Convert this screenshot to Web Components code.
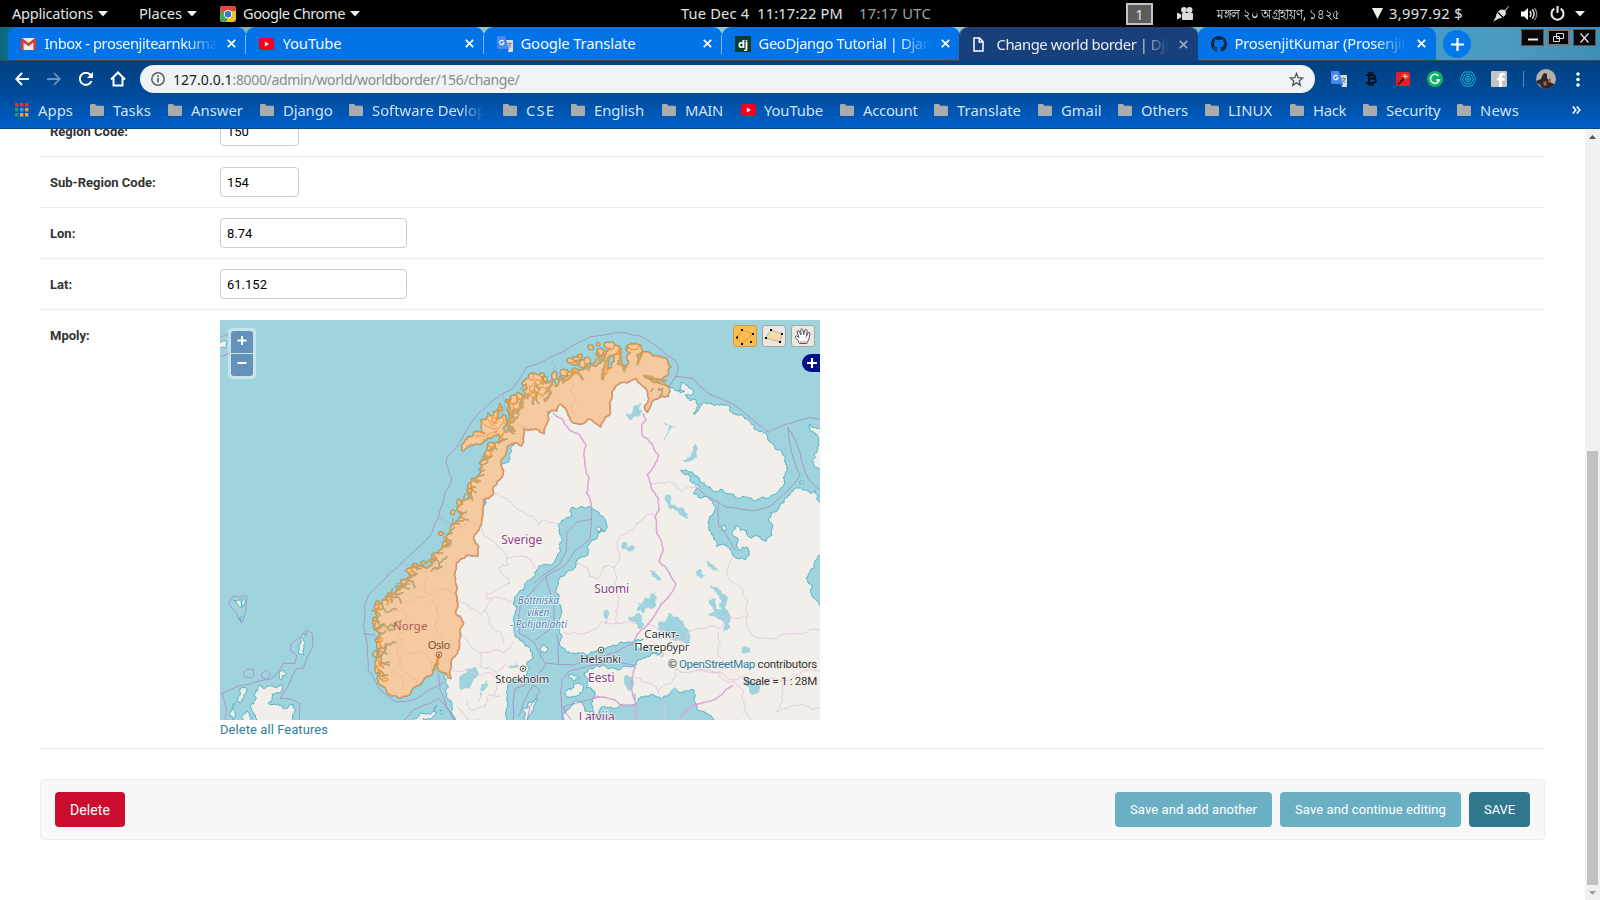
<!DOCTYPE html>
<html lang="en"><head><meta charset="utf-8"><title>Change world border</title>
<style>html,body{margin:0;height:100%;overflow:hidden;background:#fff}</style></head>
<body><desk-top></desk-top>
<script>
const define=(name,css,html,after)=>{
  const t=document.createElement('template');
  t.innerHTML=`<style>*{box-sizing:border-box}${css}</style>${html}`;
  customElements.define(name,class extends HTMLElement{
    constructor(){super();this.attachShadow({mode:'open'}).append(t.content.cloneNode(true));}
    connectedCallback(){if(after)after.call(this,this.shadowRoot);}
  });
};

/* Text run that spreads its letters over a given width */
define('fit-text',`:host{display:block;white-space:pre;flex:none}span{display:inline-block;white-space:pre}`,`<span><slot></slot></span>`,function(r){
  const w=+this.getAttribute('w'),s=r.querySelector('span');if(!w)return;
  this.style.width=w+'px';
  const n=this.textContent.length,nat=s.getBoundingClientRect().width;
  if(!nat)return;
  if(this.hasAttribute('squeeze')){s.style.transformOrigin='0 50%';s.style.transform=`scaleX(${w/nat})`;}
  else s.style.letterSpacing=((w-nat)/n).toFixed(3)+'px';
});

const G={
 tri:`<svg width="10" height="6" viewBox="0 0 10 6"><path d="M0 0h10L5 5.6z" fill="#eee"/></svg>`,
 chrome:`<svg width="16" height="16" viewBox="0 0 16 16"><rect width="16" height="16" rx="3" fill="#f3c31d"/><path d="M2 0h12a2 2 0 0 1 2 2v3H8L4 9 0 3V2a2 2 0 0 1 2-2z" fill="#dd4b3e"/><path d="M0 3l5 7 3 2-2 4H2a2 2 0 0 1-2-2z" fill="#3fa757"/><circle cx="8" cy="8.3" r="4.2" fill="#fff"/><circle cx="8" cy="8.3" r="3.3" fill="#3b78c4"/></svg>`,
 gmail:`<svg width="15" height="12" viewBox="0 0 15 12"><path d="M1 0h13v12H1z" fill="#eee"/><path d="M0 1.2Q0 0 1.2 0L7.5 5 13.8 0Q15 0 15 1.2V12h-2.6V4.4L7.5 8.3 2.6 4.4V12H0z" fill="#d93c32"/></svg>`,
 yt:`<svg width="15" height="12" viewBox="0 0 15 12"><rect width="15" height="12" rx="3" fill="#f8001c"/><path d="M5.8 3.6v4.8L10 6z" fill="#fff"/></svg>`,
 gt:`<svg width="16" height="16" viewBox="0 0 16 16"><path d="M6 4h9q1 0 1 1v10q0 1-1 1h-4z" fill="#dcdcdc"/><path d="M1 0h7l4 13H1q-1 0-1-1V1q0-1 1-1z" fill="#4889f0"/><path d="M9 13h3l-2 3z" fill="#2a56b8"/><path d="M6.6 5.2A2.2 2.2 0 1 0 7 7H5" fill="none" stroke="#fff" stroke-width="1.1"/><path d="M10.5 7.5h4.3M12.6 6.4v1M14 7.6q-.6 2.6-3 4.2M11.4 8.6q1 2 2.8 3" fill="none" stroke="#707a80" stroke-width=".9"/></svg>`,
 dj:`<svg width="16" height="16" viewBox="0 0 16 16"><rect width="16" height="16" fill="#0c3c2c"/><text x="8" y="11.5" text-anchor="middle" font-family="Noto Sans,sans-serif" font-weight="700" font-size="11" fill="#fff">dj</text></svg>`,
 file:`<svg width="11" height="15" viewBox="0 0 11 15"><path d="M1 1h5.6L10 4.6V14H1z M6.3 1v4H10" fill="none" stroke="#fff" stroke-width="1.5"/></svg>`,
 gh:`<svg width="16" height="16" viewBox="0 0 16 16"><path fill="#14263c" d="M8 0C3.58 0 0 3.58 0 8c0 3.54 2.29 6.53 5.47 7.59.4.07.55-.17.55-.38 0-.19-.01-.82-.01-1.49-2.01.37-2.53-.49-2.69-.94-.09-.23-.48-.94-.82-1.13-.28-.15-.68-.52-.01-.53.63-.01 1.08.58 1.23.82.72 1.21 1.87.87 2.33.66.07-.52.28-.87.51-1.07-1.78-.2-3.64-.89-3.64-3.95 0-.87.31-1.59.82-2.15-.08-.2-.36-1.02.08-2.12 0 0 .67-.21 2.2.82.64-.18 1.32-.27 2-.27s1.36.09 2 .27c1.53-1.04 2.2-.82 2.2-.82.44 1.1.16 1.92.08 2.12.51.56.82 1.27.82 2.15 0 3.07-1.87 3.75-3.65 3.95.29.25.54.73.54 1.48 0 1.07-.01 1.93-.01 2.2 0 .21.15.46.55.38A8.01 8.01 0 0 0 16 8c0-4.42-3.58-8-8-8z"/></svg>`,
 folder:`<svg width="14" height="12" viewBox="0 0 14 12"><path d="M0 1.2Q0 0 1.2 0H5l1.6 1.8h6.2q1.2 0 1.2 1.2v7.8q0 1.2-1.2 1.2H1.2Q0 12 0 10.8z" fill="#aaacac"/></svg>`,
 apps:`<svg width="14" height="14" viewBox="0 0 14 14"><path d="M0 0h3.4v3.4H0zM5 0h3.4v3.4H5zM10 0h3.4v3.4H10z" fill="#f02a3c"/><path d="M0 5h3.4v3.4H0z" fill="#19a05c"/><path d="M5 5h3.4v3.4H5z" fill="#2f9bff"/><path d="M10 5h3.4v3.4H10z" fill="#f29a2c"/><path d="M0 10h3.4v3.4H0z" fill="#19a05c"/><path d="M5 10h3.4v3.4H5zM10 10h3.4v3.4H10z" fill="#f4a62a"/></svg>`
};

define('top-bar',`:host{display:block;height:27px;background:#000;color:#e4e4e4;font:14.6px/27px "Noto Sans","DejaVu Sans",sans-serif}
 .b{display:grid;grid-template-columns:12px 86px 41px 48px 33px 23px 107px 331px 178px 267px 51px 40px 155px 17px 104px 28px 29px 25px 1fr;height:27px;align-items:center}
 svg{display:block}.one{width:27px;height:22px;border:2px solid #c4c4c4;background:#5c5c5c;line-height:18px;text-align:center}
 .u{color:#a2a2a2}.bn{font-size:14px}`,
 `<div class="b"><i></i><fit-text w="81">Applications</fit-text>${G.tri}<fit-text w="43">Places</fit-text>${G.tri}${G.chrome}<fit-text w="102">Google Chrome</fit-text>${G.tri}
 <fit-text w="162">Tue Dec 4  11:17:22 PM</fit-text><fit-text class="u" w="72">17:17 UTC</fit-text><div class="one">1</div>
 <svg width="16" height="13" viewBox="0 0 16 13" fill="#ddd"><circle cx="7" cy="3" r="2.9"/><circle cx="12.6" cy="3" r="2.9"/><rect x="5" y="6" width="11" height="7" rx="1"/><path d="M0 5.5l4.2 2v3l-4.2 2z"/></svg>
 <fit-text class="bn" squeeze w="123">মঙ্গল ২০ অগ্রহায়ণ, ১৪২৫</fit-text>
 <svg width="11" height="11" viewBox="0 0 11 11"><path d="M0 0h11L5.5 11z" fill="#eee"/></svg><fit-text w="74">3,997.92 $</fit-text>
 <svg width="16" height="16" viewBox="0 0 16 16"><path d="M0 16l3-5.500Q3 7 6.500 4.500L8 3.500l4 .5L15.500 0l.4.4L12.500 5l.5 3Q10 12.500 5.500 12.500z" fill="#ddd"/><path d="M5 6.500l5 5" stroke="#000" stroke-width="1.200"/></svg>
 <svg width="17" height="14" viewBox="0 0 17 14"><path d="M0 4.500h3L7 1v12L3 9.500H0z" fill="#fff"/><path d="M9 4q2 3 0 6M11.300 2.300q3.500 4.700 0 9.400" fill="none" stroke="#ddd" stroke-width="1.500"/><path d="M13.500 .8q4.500 6.200 0 12.400" fill="none" stroke="#888" stroke-width="1.300"/></svg>
 <svg width="15" height="15" viewBox="0 0 15 15" fill="none" stroke="#eee" stroke-width="2"><path d="M4.300 2.700a6 6 0 1 0 6.400 0M7.500 0v7"/></svg>${G.tri}</div>`);

/* Browser tab; attributes: icon, active, long (fades the text out), sep */
define('browser-tab',`:host{display:flex;position:relative;align-items:center;height:33px;width:238px;flex:none;background:#0274e8;color:#f2f6fa;border-radius:9px 9px 0 0;font:14.8px/33px "Noto Sans",sans-serif}
 :host([active]){background:linear-gradient(#193f79,#16417e);height:34px;box-shadow:-1px 0 #314052,1px 0 #314052;color:#e8edf4}
 :host([sep])::after{content:"";position:absolute;right:0;top:8px;height:19px;width:1px;background:#7eb4ee}
 .i{width:24px;margin-left:12.500px;display:flex}.t{width:171px;overflow:hidden}:host([long]) .t{-webkit-mask:linear-gradient(90deg,#000 140px,transparent 172px);mask:linear-gradient(90deg,#000 140px,transparent 172px)}
 .x{margin-left:11px}:host([active]) .x{opacity:.55}`,
 `<span class="i"></span><div class="t"><slot></slot></div><svg class="x" width="9" height="9" viewBox="0 0 9 9"><path d="M.8.8l7.400 7.400M8.200.8L.8 8.200" stroke="#fff" stroke-width="1.700"/></svg>`,
 function(r){r.querySelector('.i').innerHTML=G[this.getAttribute('icon')]});

define('tab-strip',`:host{display:flex;height:34px;background:linear-gradient(#3b4a58,#3b4a58) 0 33px/100% 1px no-repeat,linear-gradient(90deg,#0d667c 0,#0e6d84 8px,#9bc6c4 300px,#8fcbd8 1100px,#459bc6 1420px,#4b9bc0 1500px,#3e8fb8 1600px);padding-left:8px;align-items:flex-start}
 .new{width:28px;height:28px;border-radius:50%;background:#0278ea;margin:3px 0 0 7px;display:flex;align-items:center;justify-content:center}
 .w{display:flex;gap:3px;margin:2px 0 0 auto;padding-right:4px}.w span{width:23px;height:17px;border:1px solid #555;background:#080808;display:flex;align-items:center;justify-content:center}.w span:nth-child(2){border:2px solid #77797c}`,
 `<browser-tab icon="gmail" long sep><fit-text w="173">Inbox - prosenjitearnkuma</fit-text></browser-tab>
 <browser-tab icon="yt" sep><fit-text w="59">YouTube</fit-text></browser-tab>
 <browser-tab icon="gt" sep><fit-text w="115">Google Translate</fit-text></browser-tab>
 <browser-tab icon="dj" long><fit-text w="173">GeoDjango Tutorial | Djan</fit-text></browser-tab>
 <browser-tab icon="file" long active><fit-text w="176">Change world border | Dja</fit-text></browser-tab>
 <browser-tab icon="gh" long><fit-text w="172">ProsenjitKumar (Prosenjit</fit-text></browser-tab>
 <div class="new"><svg width="13" height="13"><path d="M6.500 0v13M0 6.500h13" stroke="#fff" stroke-width="2.200"/></svg></div>
 <div class="w"><span><svg width="10" height="8"><path d="M0 5.500h10" stroke="#eee" stroke-width="2"/></svg></span><span><svg width="11" height="9" fill="none" stroke="#ddd"><path d="M3.500.5h7v5h-7zM.5 3.500h6v5h-6z"/></svg></span><span><svg width="9" height="10"><path d="M.5.5l8 9M8.500.5l-8 9" stroke="#ddd" stroke-width="1.400"/></svg></span></div>`);

define('tool-bar',`:host{display:grid;grid-template-columns:32px 32px 31px 30px 1175px 1fr;height:36px;align-items:center;padding:0 0 0 15px;font:14px/27px "Noto Sans",sans-serif}
 svg{display:block}.o{height:28px;border-radius:14px;background:#eff3f4;display:flex;align-items:center;padding:0 11px;color:#222}.g{color:#888b8d}.o svg:last-child{margin-left:auto}.o svg:first-child{margin-right:8px}
 .e{display:grid;grid-template-columns:35px 30px 31px 33px 31px 32px 13px 40px 6px;align-items:center;padding-left:16px}`,
 `<svg width="14" height="14" viewBox="0 0 14 14" fill="none" stroke="#fff" stroke-width="2"><path d="M14 7H1.500M7 1L1.300 7 7 13"/></svg>
 <svg width="14" height="14" viewBox="0 0 14 14" fill="none" stroke="#6b93c4" stroke-width="1.800"><path d="M0 7h12.500M7 1l5.700 6L7 13"/></svg>
 <svg width="14" height="14" viewBox="0 0 14 14"><path d="M12.500 9A6 6 0 1 1 11.500 3" fill="none" stroke="#fff" stroke-width="2"/><path d="M14 0v6H8z" fill="#fff"/></svg>
 <svg width="16" height="16" viewBox="0 0 16 16"><path d="M1 8.500L8 1.500l7 7M3.500 7v7.500h9V7" fill="none" stroke="#fff" stroke-width="2"/></svg>
 <div class="o"><svg width="14" height="14" viewBox="0 0 14 14"><circle cx="7" cy="7" r="6.200" fill="none" stroke="#5c6064" stroke-width="1.500"/><path d="M7 6v4.500M7 3.300v1.600" stroke="#5c6064" stroke-width="1.700"/></svg><fit-text w="59.500">127.0.0.1</fit-text><fit-text class="g" w="287">:8000/admin/world/worldborder/156/change/</fit-text>
 <svg width="15" height="15" viewBox="0 0 15 15"><path d="M7.500 1.500l1.700 4.200 4.500.3-3.500 2.900 1.100 4.500-3.800-2.500-3.800 2.500 1.100-4.500L1.300 6l4.500-.3z" fill="none" stroke="#50565c" stroke-width="1.300"/></svg></div>
 <div class="e">${G.gt}<svg width="11" height="14" viewBox="0 0 11 16" preserveAspectRatio="none"><path d="M3.500 0v3M6.500 0v3M3.500 13v3M6.500 13v3M0 3.500h6q3 0 3 2t-3 2H3M6.500 7.500q3.500 0 3.500 2.500t-3.500 2.500H0M3 3v10" fill="none" stroke="#050d16" stroke-width="2"/></svg>
 <svg width="14" height="14"><rect width="14" height="14" rx="1.500" fill="#e0202a"/><path d="M2 12.500L8.500 6" stroke="#45101a" stroke-width="2.200"/><path d="M9 1.500v6M6.500 4.500h6M7 2.500l4 4M11 2.500l-3 3" stroke="#ffc890" stroke-width=".9"/></svg>
 <svg width="16" height="16"><circle cx="8" cy="8" r="8" fill="#11b06a"/><path d="M11.500 5A4.500 4.500 0 1 0 12.300 9H9" fill="none" stroke="#e8fff4" stroke-width="1.600"/></svg>
 <svg width="16" height="16" viewBox="0 0 16 16" fill="none" stroke="#12b4cc"><path d="M4 1h8l4 7-4 7H4L0 8z"/><path d="M5.300 3.200h5.400l2.800 4.800-2.800 4.800H5.300L2.500 8z"/><path d="M6.500 5.500h3L11 8l-1.500 2.500h-3L5 8z"/><path d="M7 7h2v2H7z"/></svg>
 <svg width="16" height="16"><rect width="16" height="16" rx="1" fill="#c2c4c6"/><path d="M11 16V9.500h2.500V7H11V5.500q0-1.300 1.300-1.300h1.500V2q-5.800-.8-5.800 3.200V7H6v2.500h2V16z" fill="#fff"/></svg>
 <svg width="1" height="16"><path d="M.5 0v16" stroke="#5c88b8"/></svg>
 <svg width="20" height="20" viewBox="0 0 20 20"><clipPath id="a"><circle cx="10" cy="10" r="10"/></clipPath><g clip-path="url(#a)"><path d="M0 0h20v20H0z" fill="#b4b0aa"/><path d="M0 12l5-2 2-5 2-1 2 1 0 4 3 4 4 2 2 0v5H0z" fill="#2e282a"/><path d="M7 13l3-1 1 4-3 1zM13 9l2 1-1 4-2-1z" fill="#a4643c"/><path d="M0 14l4 1 3 5H0z" fill="#6a7c90"/></g></svg>
 <svg width="4" height="15" fill="#fff"><circle cx="2" cy="2" r="1.800"/><circle cx="2" cy="7.500" r="1.800"/><circle cx="2" cy="13" r="1.800"/></svg></div>`);

define('book-mark',`:host{display:flex;align-items:center;flex:none}.i{width:23px;display:flex}`,`<span class="i"></span><slot></slot>`,
 function(r){r.querySelector('.i').innerHTML=G[this.getAttribute('icon')||'folder'];this.style.width=this.getAttribute('span')+'px'});
const marks=[['Apps',35,75,'apps'],['Tasks',38,78],['Answer',52,92],['Django',49.5,89],['Software Devlop',114,154],['CSE',29,68],['English',50,91],['MAIN',38,79],['YouTube',59,99,'yt'],['Account',54.5,94],['Translate',64,104],['Gmail',40.5,80],['Others',47,87],['LINUX',44.5,85],['Hack',33,73],['Security',54.5,94],['News',39,115]];
define('bookmarks-bar',`:host{display:flex;height:31px;padding:0 0 5px 15px;align-items:center;color:#d3e2f3;font:14.8px/26px "Noto Sans",sans-serif}
 .fade{width:110px;overflow:hidden;-webkit-mask:linear-gradient(90deg,#000 88px,transparent 112px);mask:linear-gradient(90deg,#000 88px,transparent 112px)}`,
 marks.map(([n,w,s,i])=>`<book-mark span="${s}" ${i?`icon="${i}"`:''}>${w>100?'<div class="fade">':''}<fit-text w="${w}">${n}</fit-text>${w>100?'</div>':''}</book-mark>`).join('')+
 `<svg width="9" height="8" viewBox="0 0 9 8"><path d="M.8.5l3 3.500-3 3.500M4.800.5l3 3.500-3 3.500" fill="none" stroke="#fff" stroke-width="1.600"/></svg>`);

define('form-row',`:host{display:flex;padding:10px;border-bottom:1px solid #ececec;font:13px/32px Roboto,sans-serif;color:#333}b{width:170px;flex:none;height:30px}`,`<b></b><slot></slot>`,
 function(r){r.querySelector('b').textContent=this.getAttribute('label')});
define('text-field',`:host{display:block;height:30px;border:1px solid #ccc;border-radius:4px;padding:0 6px;line-height:29.500px;color:#000;background:#fff}`,`<slot></slot>`,
 function(){this.style.width=this.getAttribute('w')+'px'});
define('push-button',`:host{display:block;height:35px;line-height:36px;border-radius:4px;background:#6bafc5;color:#fff;padding:0 15px;font-size:13px;font-family:Roboto,sans-serif}:host([kind=delete]){background:#cb0c2f;font-size:14px}:host([kind=save]){background:#31788f}`,`<slot></slot>`);
define('submit-row',`:host{display:flex;gap:8px;height:61px;border:1px solid #ececec;border-radius:4px;background:#f8f8f8;padding:12px 14px}i{flex:1}`,
 `<push-button kind="delete"><fit-text w="40">Delete</fit-text></push-button><i></i><push-button><fit-text w="127">Save and add another</fit-text></push-button><push-button><fit-text w="151">Save and continue editing</fit-text></push-button><push-button kind="save"><fit-text w="31">SAVE</fit-text></push-button>`);

/* ---- map geometry: units are thirds of a pixel, origin 140px from the left edge ---- */
let seed=7;const rnd=()=>(seed=(seed*16807)%2147483647)/2147483647;
const P=s=>s.trim().split(/\s+/).map(p=>p.split(',').map(Number));
function rough(pts,k,min=6){
  let out=[pts[0]];
  const go=(a,b)=>{const dx=b[0]-a[0],dy=b[1]-a[1],l=Math.hypot(dx,dy);
    if(l<min){out.push(b);return}
    const o=(rnd()-.5)*k,m=[(a[0]+b[0])/2-dy*o,(a[1]+b[1])/2+dx*o];go(a,m);go(m,b)};
  for(let i=1;i<pts.length;i++)go(pts[i-1],pts[i]);
  return out;
}
const D=(pts,z)=>'M'+pts.map(p=>p[0].toFixed(1)+' '+p[1].toFixed(1)).join('L')+(z?'z':'');
const closed=(s,k,min)=>{const p=P(s);p.push(p[0]);return D(rough(p,k,min),1)};
const open=(s,k,min)=>D(rough(P(s),k,min));
const shift=(s,dx,dy)=>P(s).map(([x,y])=>(x+dx)+','+(y+dy)).join(' ');

const border='925,228 905,226 895,235 880,240 870,262 862,276 854,262 866,240 862,212 840,190 828,175 815,180 800,188 782,186 765,198 755,220 752,240 750,282 735,292 722,320 705,308 685,296 665,312 636,305 625,280 615,262 600,252 590,272 562,275 566,298 555,320 552,340 520,328 490,325 490,350 483,377 462,368 440,385 436,405 422,430 430,455 428,465 410,490 397,510 400,522 385,535 370,538 368,570 365,600 340,658 355,680 352,709 320,705 300,718 288,740 282,765 290,800 290,840 286,880 300,890 310,910 300,928 302,950 298,985 290,1002 277,1015 272,1045 272,1075 264,1072 258,1058';
const south='258,1058 245,1056 235,1050 230,1022 237,1008 228,1030 222,1050 208,1066 190,1080 165,1100 145,1125 120,1133 95,1128 80,1112 60,1095 57,1065';
const west='57,1065 50,1050 64,1030 50,1015 54,990 46,960 60,940 42,915 52,890 44,870 48,850 62,850 85,820 108,800 128,778 152,757 178,738 200,745 217,715 240,690 258,664 268,640 275,630 294,605 304,575 300,548 325,515 330,490 348,475 358,430 378,420 382,385 420,355 455,335 442,315 458,285 445,260 450,235 480,240 490,210 510,175';
const north='510,175 520,160 545,168 556,190 575,182 588,200 600,170 612,185 640,165 655,150 680,145 694,132 706,140 720,130 735,108 740,95 755,85 765,75 782,85 752,110 745,125 724,172 730,180 752,145 768,100 780,85 784,112 772,135 798,146 806,130 800,115 812,98 798,88 815,70 840,75 845,95 830,105 836,128 848,95 865,95 880,110 910,115 932,140 925,160 905,178 880,178 850,168 868,178 895,190 918,196 928,210 925,228';
const nb=rough(P(border),.3,7),ns=rough(P(south),.4),nw=rough(P(west),.95,7),nn=rough(P(north),.45,6);
const norway=D([...nb,...ns,...nw,...nn],1);
/* fjords: short random walks from the coast inland */
let fj='';
const walk=(x,y,ang,n)=>{const p=[[x,y]];for(let i=0;i<n;i++){ang+=(rnd()-.5)*1.300;x+=Math.cos(ang)*4.500;y+=Math.sin(ang)*4.500;p.push([x,y])}return D(p)};
nw.forEach((p,i)=>{if(i%3==0&&p[1]>230)fj+=walk(p[0],p[1],(p[1]<400?.5:p[1]>800?0:-.1)+(rnd()-.5)*2,3+(rnd()*(p[1]>780?6:4)|0))});
P('500,190 515,200 530,180 545,210 560,200 575,215 525,220 505,225 470,265 455,290 880,205 895,205 910,205').forEach(p=>{fj+=walk(p[0],p[1],1.700+(rnd()-.5)*1.400,3+(rnd()*6|0))});
['50,270 80,268 110,270 125,268','68,325 95,322 120,318 140,300','95,322 115,330','80,402 105,375 125,368','92,388 90,370','72,432 105,435','70,455 100,465','92,240 110,225 130,232 138,250','105,228 108,250','125,190 150,200 165,205','150,190 175,185 178,205','228,155 250,130 275,108','240,140 262,142','212,130 235,120 240,112','265,50 290,70','270,75 290,60','243,405 247,425 240,440','232,455 240,440'].forEach(s=>fj+=open(shift(s,-15,600),.7,6));
/* open sounds between the northern islands */
const sounds=['440,140 452,100 468,75','499,65 499,100 510,125','552,70 549,105','268,215 282,175 292,150','180,250 205,205 222,190','205,235 210,200','235,225 245,190','305,145 325,158 350,140','355,120 375,135 385,150','395,105 400,120 425,85','565,140 600,150 635,150','160,285 190,262','240,160 255,180','420,70 435,92 450,60'].map(s=>open(shift(s,285,30),.4,7)).join('');
const lof=closed('305,390 315,365 340,347 375,342 365,325 362,300 385,280 400,287 420,252 424,270 412,300 430,285 438,295 428,325 445,335 430,348 400,346 370,358 335,372 320,380',.7,8);
const lofIn=['385,285 390,310 405,320','372,310 395,325 415,325','420,262 412,290 398,310','430,295 420,320 405,335','345,352 370,350 395,340 420,342'].map(s=>open(s,.7,6)).join('');
const blob=(x,y,rx,ry)=>{let p=[];for(let a=0;a<8;a++){const q=.75+rnd()*.5;p.push([x+Math.cos(a*.785)*q*rx,y+Math.sin(a*.785)*q*ry])}p.push(p[0]);return D(rough(p,.6,5),1)};
let isl=[[515,172,8,10],[532,188,10,9],[515,205,9,8],[545,165,6,6],[556,178,6,6],[582,168,7,12],[612,158,10,9],[628,160,7,6],[632,122,9,6],[650,116,12,6],[660,108,7,5],[644,130,9,4],[692,82,6,7],[714,73,4,4],[722,95,8,10],[748,76,16,8],[668,132,9,11],[682,122,10,10],[645,155,10,8],[278,577,5,6],[462,240,11,14],[478,228,10,9],[470,258,12,10],[403,302,8,10],[243,640,7,4],[165,735,7,4],[148,752,9,6],[190,728,6,4],[88,835,7,5],[50,860,6,7],[46,1000,5,9],[56,975,5,10],[62,960,6,8],[52,1030,6,10],[50,1050,4,8],[75,1078,8,5],[296,548,5,9],[328,500,4,8],[385,400,10,9],[395,375,10,7],[545,215,10,12],[520,225,11,9],[820,80,18,9]].map(a=>blob(...a)).join('');

const mainland=closed('925,200 940,206 960,218 975,215 955,212 962,188 985,202 1000,212 995,225 975,225 990,242 1008,238 1015,255 1000,282 1015,270 1030,248 1075,255 1110,262 1150,290 1185,330 1230,365 1265,392 1275,415 1283,450 1275,490 1250,520 1220,535 1180,542 1130,532 1080,508 1040,498 1020,485 998,458 962,450 985,462 992,485 1020,500 1000,520 1040,530 1065,570 1048,600 1060,650 1070,680 1105,682 1130,715 1155,720 1168,705 1162,682 1135,690 1116,640 1130,618 1160,632 1175,655 1200,648 1220,662 1237,625 1225,600 1230,578 1260,555 1290,525 1310,503 1335,510 1350,520 1365,512 1372,540 1400,560 1400,1220 605,1220 615,1180 640,1150 665,1145 675,1175 705,1178 705,1115 680,1105 672,1060 690,1045 730,1035 790,1040 825,1038 835,1018 860,1010 905,1004 870,985 838,990 826,970 850,958 820,967 790,968 750,980 720,992 690,1003 650,1000 615,988 598,968 606,950 598,900 606,880 598,830 592,800 600,770 630,750 660,715 690,670 718,635 735,635 733,595 715,575 695,565 650,568 635,562 635,588 605,600 598,630 608,660 595,700 570,735 530,750 510,780 490,810 465,830 468,870 460,900 465,950 490,965 510,985 520,1015 500,1032 508,1045 480,1075 450,1080 440,1120 445,1160 435,1220 285,1220 275,1160 258,1130 266,1100 252,1070 240,1000 250,880 270,740 340,590 410,440 520,290 620,220 760,170 890,160',.5,6);
const land=[
 '1350,312 1375,325 1400,335 1400,450 1380,448 1364,440 1375,370 1372,345',
 '140,1215 180,1180 230,1155 228,1180 190,1195 215,1215','490,1220 488,1170 510,1145 532,1135 522,1170 505,1220',
 '625,1070 640,1062 658,1075 640,1085','618,1112 640,1092 670,1098 668,1115 640,1130 622,1130','540,985 548,975 563,983 555,998 543,997','708,628 718,620 730,632 716,640',
 '1083,618 1095,616 1098,630 1086,632','1318,484 1328,482 1329,490 1320,491','240,1170 250,1176 246,1184',
 '-315,1220 -330,1160 -312,1138 -315,1120 -305,1098 -235,1092 -235,1115 -275,1150 -200,1152 -192,1170 -210,1220',
 '-370,1145 -365,1110 -345,1102 -342,1120 -360,1150','-355,1190 -340,1175 -325,1195 -340,1215','-382,1210 -375,1150 -375,1190','-243,1060 -230,1050 -220,1060 -235,1080','-185,1000 -175,950 -158,940 -165,970 -170,1005',
 '-380,840 -360,835 -355,860 -370,850','-350,835 -345,850 -355,862','-363,895 -355,890 -358,905','-428,75 -412,62 -400,65 -402,80 -420,86'
].map(s=>closed(s,.6,6)).join('');
const lakes=[
 '795,285 815,280 820,262 845,248 838,270 848,275 825,290 818,302','910,305 925,315 950,320 932,326 918,362 910,362 925,335 925,322','1005,370 1008,400 998,420 960,418 990,410 1000,395',
 '918,525 935,530 935,555 950,560 975,575 986,595 960,585 945,570 925,555','785,672 800,668 800,680 825,682 805,696 790,688','868,750 885,755 900,788 878,770',
 '822,845 845,850 852,835 875,840 870,820 888,815 888,855 865,862 850,880 830,870 840,855','805,890 835,878 850,885 845,905 855,915 835,925 820,905 805,900','735,870 742,868 744,890 738,915 732,890',
 '895,905 925,880 940,890 970,905 995,948 990,968 960,962 925,940 895,930','1042,722 1060,735 1080,755 1060,752 1045,740','1008,755 1022,748 1035,768 1010,770','1050,798 1090,822 1095,860 1112,895 1110,925 1092,935 1085,900 1050,890 1042,880 1065,875 1045,850 1055,825 1068,860 1085,870 1078,830',
 '1143,985 1155,978 1170,985 1165,998 1145,998','795,1068 818,1068 820,1095 812,1115 800,1105','815,1122 828,1122 832,1138 820,1140','925,1115 938,1105 953,1115 940,1124','1155,1075 1180,1085 1200,1100 1195,1120 1178,1125 1165,1100',
 '300,1085 318,1060 320,1045 350,1045 350,1070 320,1105 300,1108','380,1080 375,1110 355,1145 358,1110','445,1040 470,1035 465,1020 475,1040 455,1045'
].map(s=>closed(s,.6,5)).join('');
const maritime=['-420,52 -400,42 -385,58 -380,80 -392,100 -405,105 -420,112','15,850 25,825 55,795 130,725 215,640 235,590 255,520 275,477 258,425 262,410 290,380 320,330 355,280 400,240 430,220 455,208 498,143 570,112 610,95 690,50 760,39 840,48 890,78 945,120 955,140 948,170 1000,175 1045,220 1110,248 1160,285 1225,337 1350,292 1400,305',
 '1282,320 1320,465 1230,560 1175,572 1100,562 1050,535 1005,495','1282,320 1345,478 1385,515','1075,548 1075,615 1125,690','15,850 10,920 25,1035 25,1050 60,1110 90,1135 115,1146 165,1138 230,1100 250,1085','235,1060 240,1110 285,1205','130,1205 160,1170 235,1135 300,1215','10,940 45,945',
 '-395,850 -380,828 -340,828 -342,870 -355,910 -370,880 -395,850','-210,990 -205,970 -160,930 -143,940 -142,980 -170,1045 -190,1045 -240,1135 -200,1140 -180,1150 -185,1215','-210,990 -190,1005 -195,1030 -230,1030 -262,1075 -300,1082 -370,1100 -415,1120 -400,1170 -405,1215','-350,1060 -340,1048 -320,1048 -317,1065 -325,1073 -345,1072 -350,1060','-295,1060 -280,1050 -268,1062 -280,1080 -295,1070 -295,1060',
 '695,560 694,620 690,655 655,685 620,730 560,768 480,860 478,940 520,965 555,1030 640,1035 710,1015 760,1000 820,970','694,598 650,607 620,640 620,690 600,730 520,790','558,770 582,860 580,920 525,960','460,1210 465,1105 520,1080 555,1035','605,1205 605,1080 625,1055 700,1035','640,1210 610,1160 665,1145 720,1130','500,1215 510,1160 540,1110 520,1095 500,1130 475,1190','590,945 595,1030','700,1035 760,1025 825,1035'
].map(s=>open(s,.1,14)).join('');
const faint=['575,115 590,160','430,220 435,260 420,300','235,592 275,615','132,726 150,745'].map(s=>open(s,.1,14)).join('');
const inner=['400,520 470,565 535,615 550,600 605,622','365,625 400,665 440,713 500,710 525,745','440,713 445,735 415,745 450,790 420,805 378,820 380,838 460,845','290,840 325,855 365,885 375,870 420,935 430,970','375,870 400,835','302,935 362,998 360,1040 410,1060 440,1030','362,998 410,990 430,1000 460,965','275,1052 350,1065 400,1060','320,1140 330,1170 375,1160 380,1130 420,1130','290,1160 320,1190 330,1215','400,1060 410,1100 400,1130','885,585 830,610 800,640 770,670 780,705 765,740 768,870 775,915','650,728 680,740 690,770 712,775 730,740 765,745','610,935 700,930 725,905 775,910 830,910','875,490 945,490 965,515 985,500 1020,505','1118,710 1100,745 1115,785 1150,810 1162,880 1170,935 1200,955 1290,940 1380,930','1162,890 1115,890 1080,925 1010,925 965,970 860,910','1075,935 1072,1000 1100,1045 1055,1055','825,1070 880,1095 895,1115 950,1045 1000,1055 1060,1060 1120,1080 1150,1070 1210,1085 1280,1080 1330,1050 1380,1055','890,1110 910,1150 915,1200','1150,1110 1155,1160 1180,1210','1250,1175 1290,1160 1380,1165','1270,1090 1265,1130 1250,1175','1010,1050 1085,1075 1120,1085 1150,1110'].map(s=>open(s,.35,10)).join('');
const state=['580,278 625,325 660,345 678,375 675,440 688,475 680,520 695,560','850,280 858,300 845,315 848,350 875,370 896,405 862,465 895,535 898,570 885,590 890,640 910,690 897,725 948,792 890,875 820,965','825,1035 815,1080 820,1130 825,1205','700,1130 745,1135 790,1160 825,1155','955,1195 1010,1155 1120,1095'].map(s=>open(s,.2,10)).join('');
const nor=['290,625 360,618','195,745 190,800 210,828 230,812 270,815 290,838','125,850 170,830 200,832','215,840 235,880 232,930 245,950 240,1000','60,855 130,865 150,930 110,940 130,970 110,1000 120,1040 170,1080','130,995 175,990 200,1010 218,1050','100,1055 125,1065 130,1110','640,180 632,210 648,240 632,270 645,290','440,320 500,320'].map(s=>open(s,.4,8)).join('');
const T=(x,y,s,c,w,sz=36,extra='')=>`<text x="${x}" y="${y}" fill="${c}" font-size="${sz}" textLength="${w}" ${extra}>${s}</text>`;
const dot=(x,y,c)=>`<g fill="none" stroke="#fff" stroke-width="12"><circle cx="${x}" cy="${y}" r="4"/></g><circle cx="${x}" cy="${y}" r="8.500" fill="none" stroke="${c}" stroke-width="2.700"/><circle cx="${x}" cy="${y}" r="3" fill="${c}"/>`;
define('world-map',`:host{display:block;position:relative;width:600px;height:400px;overflow:hidden;background:#9fd3de}
 svg{display:block}text{font-family:"Noto Sans",sans-serif;paint-order:stroke;stroke:#fff;stroke-width:5px;stroke-opacity:.75;stroke-linejoin:round}.n{stroke:none}
 .z{position:absolute;left:8px;top:8px;width:28px;height:51px;padding:3px;border-radius:4px;background:rgba(255,255,255,.4)}.z div{height:22px;margin-bottom:1px;background:#6491b9;border-radius:3px 3px 0 0;display:flex;justify-content:center;align-items:center;padding-bottom:2px}.z div+div{border-radius:0 0 3px 3px}
 .p{position:absolute;top:5px;right:5px;display:flex;gap:5px}.p div{width:24px;height:22px;border:1px solid #aaa49e;border-radius:3px;background:#ebe8e4}.p div:first-child{background:#fdbd4c;border-color:#c89c54}
 .l{position:absolute;right:0;top:34px;width:18px;height:18px;border-radius:9px 0 0 9px;background:#00108a;display:flex;align-items:center;justify-content:center;padding-left:2px}
 .c{position:absolute;right:3px;top:336px;font:11.500px/17px Roboto,sans-serif;color:#333;display:grid;justify-items:end}.c div{display:flex}a{color:#2a82a2}`,
 `<svg width="600" height="400" viewBox="-420 0 1800 1200"><g stroke-linejoin="round" fill="none">
 <path d="${mainland}${land}" fill="#f2efea" stroke="#4fb4c5" stroke-width="3"/>
 <path d="${maritime}" stroke="#a98cc4" stroke-width="3" opacity=".85"/><path d="${faint}" stroke="#a98cc4" stroke-width="2.500" opacity=".45"/>
 <path d="${lakes}" fill="#9fd3de"/><path d="${inner}" stroke="#e6c5df" stroke-width="2.800"/><path d="${state}" stroke="#dba6d4" stroke-width="4.500"/>
 <path d="M925 203L948 168" stroke="#a98cc4" stroke-width="3"/>
 <path d="${norway}${lof}${isl}" stroke="#55b0b8" stroke-width="6.500"/>
 <path d="${norway}" fill="#f6caa1"/><path d="${nor}" stroke="#f1b795" stroke-width="2.800"/>
 <path d="${fj}" stroke="#8fb09c" stroke-width="4.800"/><path d="${fj}" stroke="#ef9638" stroke-width="2.600"/>
 <path d="${D([...ns,...nw,...nn])}" stroke="#f0943a" stroke-width="3.400"/><path d="${D(nb)}" stroke="#fa9058" stroke-width="4.200"/>
 <path d="${lof}${isl}" fill="#f6caa1" stroke="#ef9638" stroke-width="3.200"/><path d="${lofIn}" stroke="#ef9638" stroke-width="3"/>
 <path d="${sounds}" stroke="#ef9638" stroke-width="7.500"/><path d="${sounds}" stroke="#7dc0c4" stroke-width="2.600"/></g>
 ${T(424,671,'Sverige','#8c3c84',123)}${T(703,819,'Suomi','#8c3c84',104)}${T(684,1085,'Eesti','#8c3c84',80)}${T(656,1203,'Latvija','#8c3c84',108)}
 ${T(99,930,'Norge','#b05a58',103,34,'class="n"')}${T(203,988,'Oslo','#7c5638',68,34,'class="n"')}
 ${T(406,1089,'Stockholm','#333',162,34)}${T(661,1030,'Helsinki','#333',122,34)}${T(853,954,'Санкт-','#333',105,34)}${T(823,992,'Петербург','#333',166,34)}
 <g font-style="italic">${T(473,852,'Bottniska','#5082b4',124,30)}${T(501,888,'viken','#5082b4',67,30)}${T(450,923,'- Pohjanlahti','#5082b4',171,30)}</g>
 <circle cx="237" cy="1004" r="8.500" fill="none" stroke="#8a5c38" stroke-width="2.700"/><circle cx="237" cy="1004" r="3" fill="#8a5c38"/>${dot(489,1046,'#444')}${dot(723,990,'#444')}<circle cx="905" cy="1004" r="5" fill="#fff" stroke="#999" stroke-width="2"/></svg>
 <div class="z"><div><svg width="10" height="12"><path d="M5 1v9M.5 5.500h9" stroke="#fff" stroke-width="2"/></svg></div><div><svg width="10" height="12"><path d="M.5 5h9" stroke="#fff" stroke-width="2"/></svg></div></div>
 <div class="p"><div><svg width="22" height="20" viewBox="0 0 22 20"><path d="M3 11.500L8 4l11 4M8 17.500L3 11.500" fill="none" stroke="#d9a048"/><path d="M8 17.500L19 8" stroke="#f08a4c"/><path d="M2 10.500h2v2H2zM7 3h2v2H7zM18 7h2v2h-2zM16 15h2v2h-2zM7 17h2v2H7z"/></svg></div>
 <div><svg width="22" height="20" viewBox="0 0 22 20"><path d="M3 12L8 4l11 4-2 8z" fill="#f4dcaa" stroke="#c8b48c"/><path d="M2 11h2v2H2zM7 3h2v2H7zM18 7h2v2h-2zM16 15h2v2h-2z"/></svg></div>
 <div><svg width="22" height="20" viewBox="0 0 22 20"><path d="M7.500 17.500q-1-3-4-6-.5-1.700 1.200-1.600L7 11.500 5 6q.5-1.900 2-1l2 4-.3-5.500q1-1.600 2.200 0l.8 5L13 4q1.400-1.300 2.200.3L14.500 10l1.700-3.500q1.500-.7 1.800 1-.5 6-3.200 10z" fill="#fff" stroke="#555"/><path d="M8 16h6M13.500 12l1-2" stroke="#999"/></svg></div></div>
 <div class="l"><svg width="10" height="10"><path d="M5 0v10M0 5h10" stroke="#fff" stroke-width="2.200"/></svg></div>
 <div class="c"><div><fit-text w="11">© </fit-text><a><fit-text w="76">OpenStreetMap</fit-text></a><fit-text w="62"> contributors</fit-text></div><fit-text w="74">Scale = 1 : 28M</fit-text></div>`);

define('admin-form',`:host{display:block;margin:-23px 40px 0;width:1505px}.m{width:600px}.d{color:#31809c;line-height:20px;height:18px}submit-row{margin-top:30px}`,
 `<form-row label="Region Code:"><text-field w="79">150</text-field></form-row><form-row label="Sub-Region Code:"><text-field w="79">154</text-field></form-row>
 <form-row label="Lon:"><text-field w="187">8.74</text-field></form-row><form-row label="Lat:"><text-field w="187">61.152</text-field></form-row>
 <form-row label="Mpoly:"><div class="m"><world-map></world-map><div class="d"><fit-text w="108">Delete all Features</fit-text></div></div></form-row><submit-row></submit-row>`);
define('scroll-bar',`:host{display:flex;flex-direction:column;align-items:center;width:15px;background:#f1f1f1;padding:5px 0 4px}svg{flex:none}.th{width:11px;height:434px;margin:auto 0 6px;background:#c1c1c1}`,
 `<svg width="7" height="5"><path d="M0 5h7L3.500 1z" fill="#555"/></svg><div class="th"></div><svg width="7" height="5"><path d="M0 0h7L3.500 4z" fill="#a0a0a0"/></svg>`);
define('desk-top',`:host{display:flex;flex-direction:column;width:1600px;height:900px;overflow:hidden;background:#fff}
 .k{background:linear-gradient(#03407f,#004b9a 50%,#0060c8);border-bottom:1px solid #06498f}.v{flex:1;display:flex;overflow:hidden;justify-content:space-between;min-height:0}`,
 `<top-bar></top-bar><tab-strip></tab-strip><div class="k"><tool-bar></tool-bar><bookmarks-bar></bookmarks-bar></div><div class="v"><admin-form></admin-form><scroll-bar></scroll-bar></div>`);
</script></body></html>
